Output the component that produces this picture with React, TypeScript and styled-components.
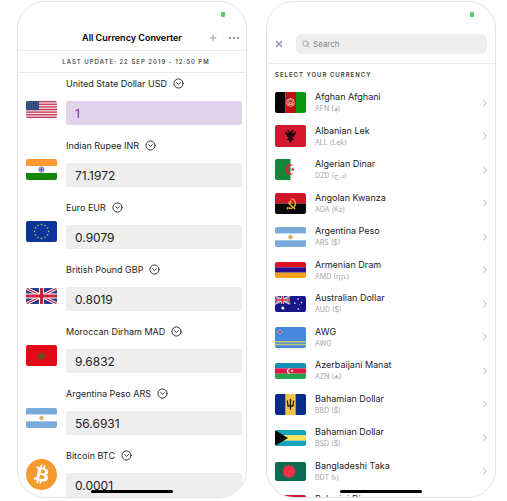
import React, { useState } from "react";
import styled, { createGlobalStyle } from "styled-components";
import { CircleChevronDown, ChevronRight, Ellipsis, Plus, Search, X } from "lucide-react";
import { SiBitcoin } from "react-icons/si";

const GlobalStyle = createGlobalStyle`
  * { box-sizing: border-box; }
  body { margin: 0; background: #fff; color: #1c1c1e; font-family: Inter, "Noto Sans", "Liberation Sans", sans-serif; }
  button, input { font: inherit; color: inherit; }
`;

const Page = styled.main`
  display: grid;
  grid-template-columns: 1fr 1fr;
  gap: 19px;
  height: 100vh;
  padding: 1px 11px 3px 17px;
`;

const Phone = styled.section`
  position: relative;
  min-width: 0;
  overflow: hidden;
  border: 1px solid #e2e2e2;
  border-radius: 28px;
  background: #fff;
`;

const StatusBar = styled.div`
  display: flex;
  justify-content: flex-end;
  height: 24px;
  padding: 10px 21px 0 0;
`;

const Battery = styled.span`
  width: 4px;
  height: 5px;
  border-radius: 1px;
  background: #55cf69;
`;

const HomeIndicator = styled.div`
  position: absolute;
  bottom: 4px;
  left: 50%;
  width: 82px;
  height: 3px;
  border-radius: 2px;
  background: #000;
  transform: translateX(-50%);
`;

const IconButton = styled.button`
  display: flex;
  align-items: center;
  justify-content: center;
  padding: 0;
  border: 0;
  background: none;
  color: #8d89b4;
`;

const TitleBar = styled.header`
  display: grid;
  grid-template-columns: 1fr auto 1fr;
  align-items: center;
  height: 25px;
  padding: 0 5px;
  border-bottom: 1px solid #ececec;
`;

const Title = styled.h1`
  grid-column: 2;
  margin: 0;
  font-size: 9px;
  font-weight: 600;
  line-height: 12px;
  color: #000;
`;

const Actions = styled.div`
  display: flex;
  justify-content: flex-end;
  gap: 9px;
`;

const UpdateNote = styled.p`
  height: 22px;
  margin: 0;
  padding-left: 8px;
  border-bottom: 1px solid #e8e8e8;
  font-size: 6px;
  font-weight: 500;
  line-height: 21px;
  letter-spacing: 1px;
  text-align: center;
  color: #333;
`;

const Converter = styled.ul`
  margin: 0;
  padding: 0;
  list-style: none;
`;

const RateRow = styled.li`
  display: grid;
  grid-template-columns: 31px 1fr;
  column-gap: 9px;
  height: 62px;
  padding: 1px 4px 10px 8px;
`;

const RateFlag = styled.div`
  display: flex;
  align-self: end;
  padding-bottom: 7px;
`;

const RateHead = styled.div`
  display: flex;
  align-items: center;
  gap: 6px;
  height: 18px;
  margin-bottom: 9px;
  font-size: 9px;
  white-space: nowrap;
`;

const PickButton = styled(IconButton)`
  color: #222;
`;

const Amount = styled.input<{ $active?: boolean }>`
  display: block;
  width: 100%;
  height: 24px;
  padding: 0 9px;
  border: 0;
  border-radius: 2px;
  outline: 0;
  background: ${(p) => (p.$active ? "#dfd4ea" : "#eeeeee")};
  color: ${(p) => (p.$active ? "#8e24aa" : "#1c1c1e")};
  font-size: 12px;
`;

const SearchBar = styled.header`
  display: flex;
  align-items: center;
  gap: 12px;
  height: 38px;
  padding: 0 8px 1px 7px;
  border-bottom: 1px solid #ececec;
`;

const SearchField = styled.label`
  display: flex;
  flex: 1;
  align-items: center;
  gap: 3px;
  min-width: 0;
  height: 20px;
  padding: 0 6px;
  border-radius: 6px;
  background: #eeeeee;
  color: #808085;
`;

const SearchInput = styled.input`
  flex: 1;
  min-width: 0;
  padding: 0;
  border: 0;
  outline: 0;
  background: none;
  font-size: 8px;
  &::placeholder { color: #808085; opacity: 1; }
`;

const SectionTitle = styled.h2`
  margin: 0;
  padding: 0 8px;
  font-size: 6px;
  font-weight: 600;
  line-height: 22px;
  letter-spacing: 1px;
  color: #3c3c3c;
`;

const CurrencyList = styled.ul`
  display: grid;
  grid-auto-rows: 33px 34px;
  margin: 0;
  padding: 0;
  list-style: none;
`;

const CurrencyButton = styled.button`
  display: grid;
  grid-template-columns: 31px 1fr auto;
  align-items: center;
  column-gap: 9px;
  width: 100%;
  height: 100%;
  padding: 0 4px 0 8px;
  border: 0;
  background: none;
  text-align: left;
  color: #b4b4b8;
`;

const CurrencyText = styled.span`
  display: flex;
  flex-direction: column;
  gap: 1px;
`;

const CurrencyName = styled.span`
  font-size: 9px;
  line-height: 12px;
  color: #1c1c1e;
`;

const CurrencyCode = styled.span`
  font-size: 7px;
  line-height: 10px;
  color: #a4a4a8;
`;

const FlagSvg = styled.svg`
  display: block;
  border-radius: 2px;
`;

function star(cx: number, cy: number, r: number, n = 5, inner = 0.42) {
  return Array.from({ length: n * 2 }, (_, i) => {
    const a = (Math.PI * i) / n - Math.PI / 2;
    const q = i % 2 ? r * inner : r;
    return `${(cx + q * Math.cos(a)).toFixed(2)},${(cy + q * Math.sin(a)).toFixed(2)}`;
  }).join(" ");
}

const UnionJack = ({ w, h }: { w: number; h: number }) => (
  <>
    <rect width={w} height={h} fill="#243c8c" />
    <path d={`M0 0L${w} ${h}M${w} 0L0 ${h}`} stroke="#fff" strokeWidth={h * 0.2} />
    <path d={`M0 0L${w} ${h}M${w} 0L0 ${h}`} stroke="#d0203a" strokeWidth={h * 0.07} />
    <path d={`M${w / 2} 0V${h}M0 ${h / 2}H${w}`} stroke="#fff" strokeWidth={h * 0.32} />
    <path d={`M${w / 2} 0V${h}M0 ${h / 2}H${w}`} stroke="#d0203a" strokeWidth={h * 0.19} />
  </>
);

type FlagArt = { h: number; art: React.ReactNode };

const bands = (h: number, colors: string[]) =>
  colors.map((c, i) => <rect key={i} y={(i * h) / colors.length} width="31" height={h / colors.length} fill={c} />);

const flags: Record<string, FlagArt> = {
  us: {
    h: 17,
    art: (
      <>
        <rect width="31" height="17" fill="#f3dfe3" />
        {[0, 1, 2, 3, 4, 5, 6].map((i) => (
          <rect key={i} y={i * 2.615} width="31" height="1.31" fill="#c5385a" />
        ))}
        <rect width="13" height="9.15" fill="#2e4a80" />
        {[1.5, 3.5, 5.5, 7.5].map((y) =>
          [1.5, 4, 6.5, 9, 11.5].map((x) => <circle key={`${x}-${y}`} cx={x} cy={y} r=".35" fill="#9fb0cf" />)
        )}
      </>
    ),
  },
  in: {
    h: 21,
    art: (
      <>
        {bands(21, ["#ff9933", "#ffffff", "#128807"])}
        <circle cx="15.5" cy="10.5" r="2.6" fill="#d5d5ee" stroke="#5555a5" strokeWidth=".8" />
        <path d="M15.5 8v5M13 10.5h5M13.8 8.8l3.4 3.4M17.2 8.8l-3.4 3.4" stroke="#5555a5" strokeWidth=".4" />
        <circle cx="15.5" cy="10.5" r=".9" fill="#33338c" />
      </>
    ),
  },
  eu: {
    h: 21,
    art: (
      <>
        <rect width="31" height="21" fill="#0a3597" />
        {Array.from({ length: 12 }, (_, i) => (
          <polygon
            key={i}
            points={star(15.5 + 7 * Math.sin((i * Math.PI) / 6), 10.5 - 7 * Math.cos((i * Math.PI) / 6), 1.2)}
            fill="#c9c860"
          />
        ))}
      </>
    ),
  },
  gb: { h: 16, art: <UnionJack w={31} h={16} /> },
  ma: {
    h: 21,
    art: (
      <>
        <rect width="31" height="21" fill="#e30a17" />
        <polygon points={star(15.5, 11, 4.8, 5, 0.5)} fill="#5a561c" />
      </>
    ),
  },
  ar: {
    h: 20,
    art: (
      <>
        {bands(20, ["#78aadb", "#ffffff", "#78aadb"])}
        <polygon points={star(15.5, 10, 2.6, 12, 0.7)} fill="#d4ac68" />
      </>
    ),
  },
  af: {
    h: 21,
    art: (
      <>
        <path d="M0 0h10.5v21H0z" fill="#050505" />
        <path d="M10.5 0h10.5v21H10.5z" fill="#be1010" />
        <path d="M21 0h10v21H21z" fill="#0b970f" />
        <circle cx="15.5" cy="10.5" r="3.9" fill="none" stroke="#efb8a8" strokeWidth=".9" />
        <path d="M13.2 12.5V10a2.3 2.3 0 0 1 4.6 0v2.5zM15.5 6v2M14.5 12.5v-2h2v2" fill="none" stroke="#f5cdbd" strokeWidth=".7" />
      </>
    ),
  },
  al: {
    h: 22,
    art: (
      <>
        <rect width="31" height="22" fill="#d5172f" />
        <path
          d="M15.5 7.2L14 5l-2 .3.8 1.2 1 .6-.3 1.2-3.6-2 .6 2.2.3 1.2.8 1 .6 1.3 1.6.1-1 1.7-1.5.7 1.8.5.6-.5.3 1.4 1.5 2 1.5-2 .3-1.4.6.5 1.8-.5-1.5-.7-1-1.7 1.6-.1.6-1.3.8-1 .3-1.2.6-2.2-3.6 2-.3-1.2 1-.6.8-1.2-2-.3z"
          fill="#26090c"
        />
      </>
    ),
  },
  dz: {
    h: 21,
    art: (
      <>
        <rect width="31" height="21" fill="#fff" />
        <rect width="15.5" height="21" fill="#12873b" />
        <path d="M18.9 6.7a5.2 5.2 0 1 0 0 7.6 4.1 4.1 0 1 1 0-7.6z" fill="#d3263a" />
        <polygon points={star(17.7, 10.5, 2.3)} fill="#d3263a" />
      </>
    ),
  },
  ao: {
    h: 21,
    art: (
      <>
        {bands(21, ["#d0142b", "#080808"])}
        <path d="M16.5 5.6a5 5 0 0 1 2.6 8.3 5 5 0 0 1-5.5 1M13.3 9.8l6.8 6.2" fill="none" stroke="#edbf21" strokeWidth="1.3" />
        <polygon points={star(15.4, 9, 2.1)} fill="#edbf21" />
        <path d="M13 14l-1 2.4" stroke="#edbf21" strokeWidth="1.2" />
      </>
    ),
  },
  am: { h: 16, art: bands(16, ["#e01222", "#2d108f", "#f5a018"]) },
  au: {
    h: 16,
    art: (
      <>
        <rect width="31" height="16" fill="#17178a" />
        <UnionJack w={15} h={8} />
        {[[7.8, 12, 2.1], [23, 3, 1.1], [26.5, 6.4, 1.1], [19.8, 7.3, 1.1], [23.3, 13, 1.2], [24.6, 8.8, 0.6]].map(([x, y, r]) => (
          <polygon key={`${x}`} points={star(x, y, r, 7, 0.5)} fill="#fff" />
        ))}
      </>
    ),
  },
  aw: {
    h: 21,
    art: (
      <>
        <rect width="31" height="21" fill="#4588dc" />
        <path d="M0 14.7h31M0 17.5h31" stroke="#c5cb72" strokeWidth="1.5" />
        <polygon points={star(5, 5, 2.8, 4, 0.45)} fill="#d63552" stroke="#b9c8ee" strokeWidth=".5" />
      </>
    ),
  },
  az: {
    h: 16,
    art: (
      <>
        {bands(16, ["#148ebb", "#df1747", "#23a24b"])}
        <path d="M15.9 6.3a2.4 2.4 0 1 0 0 3.4 1.9 1.9 0 1 1 0-3.4z" fill="#fff" />
        <polygon points={star(17, 8, 1.4, 8, 0.5)} fill="#fff" />
      </>
    ),
  },
  bb: {
    h: 21,
    art: (
      <>
        <rect width="31" height="21" fill="#082b88" />
        <rect x="10.3" width="10.4" height="21" fill="#f6c349" />
        <path d="M15.5 5.2v10.6M12 6.6c1 1.6.6 3.6 1 5.4h5c.4-1.8 0-3.8 1-5.4" fill="none" stroke="#241708" strokeWidth="1.3" />
        <path d="M15.5 4.5l-1 2h2z" fill="#241708" />
      </>
    ),
  },
  bs: {
    h: 16,
    art: (
      <>
        {bands(16, ["#18a5bb", "#f8e35c", "#18a5bb"])}
        <path d="M0 0l13 8L0 16z" fill="#080808" />
      </>
    ),
  },
  bd: {
    h: 19,
    art: (
      <>
        <rect width="31" height="19" fill="#0b6b50" />
        <circle cx="14" cy="9.5" r="6.2" fill="#f42f45" />
      </>
    ),
  },
  bh: {
    h: 19,
    art: (
      <>
        <rect width="31" height="19" fill="#ce1738" />
        <path d="M0 0h8l4 2-4 2 4 2-4 2 4 2-4 2 4 2-4 2 4 2-4 1H0z" fill="#fff" />
      </>
    ),
  },
};

const Flag = ({ code }: { code: string }) => {
  const { h, art } = flags[code];
  return (
    <FlagSvg width="31" height={h} viewBox={`0 0 31 ${h}`} aria-hidden="true">
      {art}
    </FlagSvg>
  );
};

const rates = [
  { flag: "us", label: "United State Dollar USD", value: "1" },
  { flag: "in", label: "Indian Rupee INR", value: "71.1972" },
  { flag: "eu", label: "Euro EUR", value: "0.9079" },
  { flag: "gb", label: "British Pound GBP", value: "0.8019" },
  { flag: "ma", label: "Moroccan Dirham MAD", value: "9.6832" },
  { flag: "ar", label: "Argentina Peso ARS", value: "56.6931" },
  { flag: "btc", label: "Bitcoin BTC", value: "0.0001" },
];

const currencies = [
  ["af", "Afghan Afghani", "AFN (؋)"],
  ["al", "Albanian Lek", "ALL (Lek)"],
  ["dz", "Algerian Dinar", "DZD (د.ج)"],
  ["ao", "Angolan Kwanza", "AOA (Kz)"],
  ["ar", "Argentina Peso", "ARS ($)"],
  ["am", "Armenian Dram", "AMD (դր.)"],
  ["au", "Australian Dollar", "AUD ($)"],
  ["aw", "AWG", "AWG"],
  ["az", "Azerbaijani Manat", "AZN (₼)"],
  ["bb", "Bahamian Dollar", "BBD ($)"],
  ["bs", "Bahamian Dollar", "BSD ($)"],
  ["bd", "Bangladeshi Taka", "BDT (৳)"],
  ["bh", "Bahraini Dinar", "BHD"],
];

function ConverterScreen() {
  const [values, setValues] = useState(rates.map((r) => r.value));
  return (
    <Phone>
      <StatusBar><Battery /></StatusBar>
      <TitleBar>
        <Title>All Currency Converter</Title>
        <Actions>
          <IconButton aria-label="Add currency"><Plus size={10} strokeWidth={2} /></IconButton>
          <IconButton aria-label="More"><Ellipsis size={14} strokeWidth={2} /></IconButton>
        </Actions>
      </TitleBar>
      <UpdateNote>LAST UPDATE: 22 SEP 2019 - 12:50 PM</UpdateNote>
      <Converter>
        {rates.map((r, i) => (
          <RateRow key={r.flag}>
            <RateFlag>
              {r.flag === "btc" ? <SiBitcoin size={31} color="#f59a2f" /> : <Flag code={r.flag} />}
            </RateFlag>
            <div>
              <RateHead>
                <label htmlFor={`amount-${r.flag}`}>{r.label}</label>
                <PickButton aria-label={`Change ${r.label}`}><CircleChevronDown size={11} strokeWidth={2} /></PickButton>
              </RateHead>
              <Amount
                id={`amount-${r.flag}`}
                $active={i === 0}
                value={values[i]}
                onChange={(e) => setValues(values.map((v, k) => (k === i ? e.target.value : v)))}
              />
            </div>
          </RateRow>
        ))}
      </Converter>
      <HomeIndicator />
    </Phone>
  );
}

function PickerScreen() {
  return (
    <Phone>
      <StatusBar><Battery /></StatusBar>
      <SearchBar>
        <IconButton aria-label="Close"><X size={10} strokeWidth={3} /></IconButton>
        <SearchField>
          <Search size={8} strokeWidth={2} />
          <SearchInput type="text" placeholder="Search" aria-label="Search" />
        </SearchField>
      </SearchBar>
      <SectionTitle>SELECT YOUR CURRENCY</SectionTitle>
      <CurrencyList>
        {currencies.map(([flag, name, code]) => (
          <li key={flag}>
            <CurrencyButton>
              <Flag code={flag} />
              <CurrencyText>
                <CurrencyName>{name}</CurrencyName>
                <CurrencyCode>{code}</CurrencyCode>
              </CurrencyText>
              <ChevronRight size={12} strokeWidth={2} />
            </CurrencyButton>
          </li>
        ))}
      </CurrencyList>
      <HomeIndicator />
    </Phone>
  );
}

export default function App() {
  return (
    <>
      <GlobalStyle />
      <Page>
        <ConverterScreen />
        <PickerScreen />
      </Page>
    </>
  );
}
